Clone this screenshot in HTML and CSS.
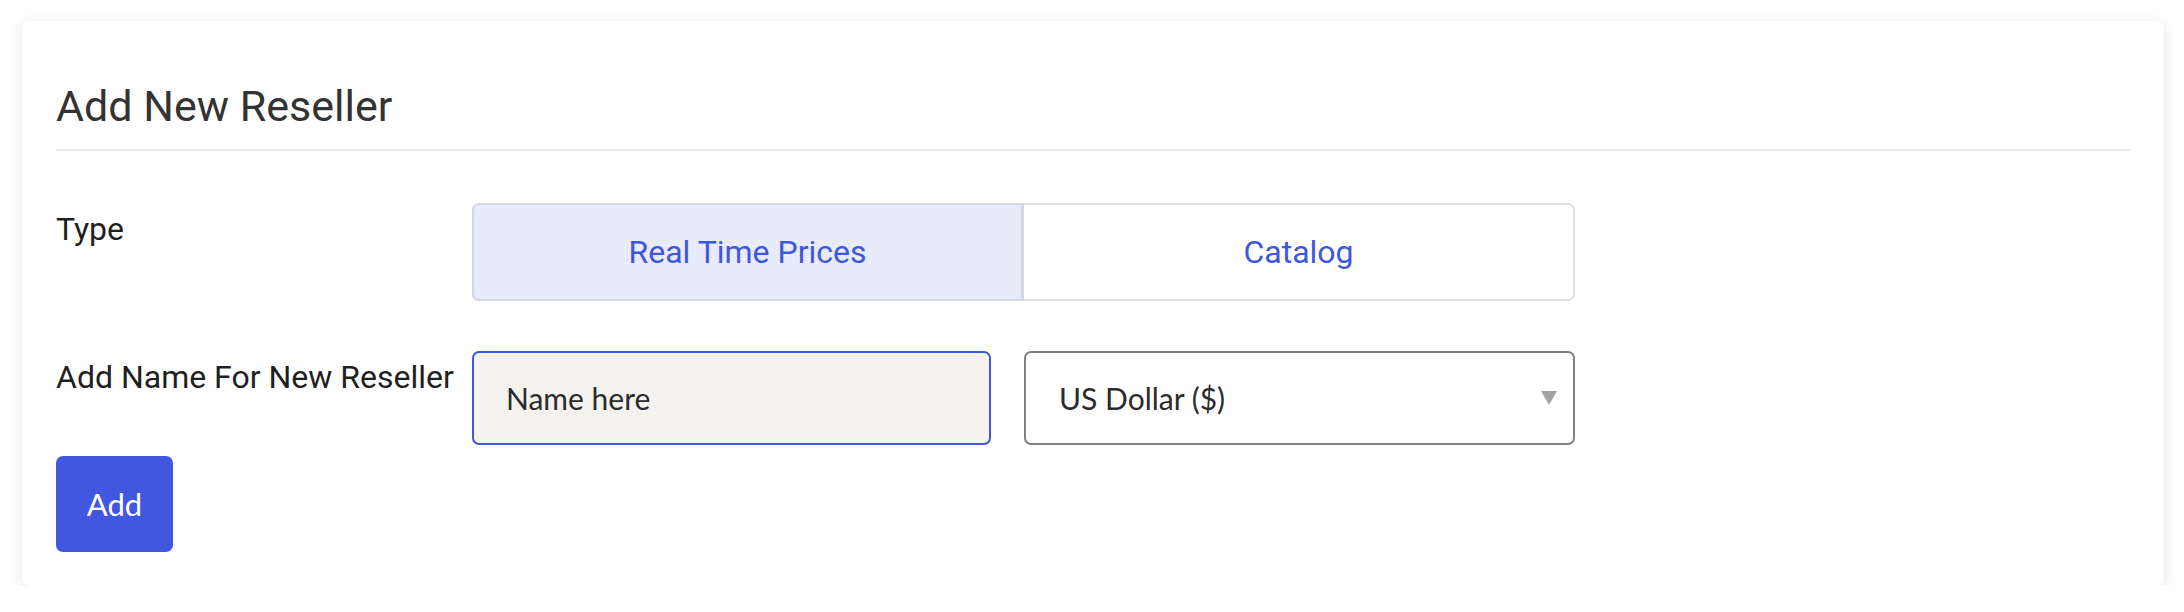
FILE: index.html
```html
<!DOCTYPE html>
<html lang="en">
<head>
    <meta charset="UTF-8">
    <meta name="viewport" content="width=device-width, initial-scale=1.0">
    <title>Add New Reseller</title>
    <link rel="stylesheet" href="styles.css">
</head>
<body>
    <div class="card">
        <div class="card-header">
            <h2>Add New Reseller</h2>
        </div>

        <form class="reseller-form">
            <div class="form-row">
                <label class="form-label">Type</label>
                <div class="type-toggle">
                    <button type="button" class="toggle-btn active">Real Time Prices</button>
                    <button type="button" class="toggle-btn">Catalog</button>
                </div>
            </div>

            <div class="form-row">
                <label class="form-label" for="reseller-name">Add Name For New Reseller</label>
                <div class="name-fields">
                    <input type="text" id="reseller-name" class="name-input" placeholder="Name here">
                    <div class="select-wrap">
                        <select class="currency-select">
                            <option>US Dollar ($)</option>
                            <option>Euro (€)</option>
                        </select>
                    </div>
                </div>
            </div>

            <button type="button" class="add-btn">Add</button>
        </form>
    </div>
</body>
</html>
```

FILE: styles.css
```css
* {
    margin: 0;
    padding: 0;
    box-sizing: border-box;
}

body {
    background-color: #ffffff;
    font-family: Roboto, "Liberation Sans", sans-serif;
    color: #222222;
}

.card {
    margin: 21px 20px 0 22px;
    padding: 59px 34px 34px;
    background: #ffffff;
    border-radius: 7px;
    box-shadow: 0 3px 16px rgba(0, 0, 0, 0.11);
}

.card-header {
    padding-bottom: 17px;
    border-bottom: 2px solid #ebebeb;
}

h2 {
    font-size: 43px;
    font-weight: 400;
    line-height: 52px;
    color: #333333;
}

.reseller-form {
    margin-top: 52px;
}

.form-row {
    display: grid;
    grid-template-columns: 416px 1103px;
}

.form-row + .form-row {
    margin-top: 50px;
}

.form-label {
    padding-top: 2px;
    font-size: 32px;
    line-height: 48px;
    color: #1f1f1f;
}

.type-toggle {
    display: grid;
    grid-template-columns: 552px 551px;
    height: 98px;
}

.toggle-btn {
    font-family: Roboto, "Liberation Sans", sans-serif;
    font-size: 32px;
    color: #3f57dc;
    background: #ffffff;
    border: 2px solid #e2e2e2;
    border-left: none;
    border-radius: 0 7px 7px 0;
    cursor: pointer;
}

.toggle-btn.active {
    background: #e8ecfa;
    border: 2px solid #d2d7e4;
    border-right-width: 3px;
    border-radius: 7px 0 0 7px;
}

.name-fields {
    display: grid;
    grid-template-columns: 519px 551px;
    gap: 33px;
}

.name-input {
    height: 94px;
    padding: 0 32px;
    font-family: Lato, "Liberation Sans", sans-serif;
    font-size: 30px;
    color: #2b2b2b;
    background: #f3f2ef;
    border: 2px solid #3f57dc;
    border-radius: 7px;
    outline: none;
}

.name-input::placeholder {
    color: #2b2b2b;
    opacity: 1;
}

.select-wrap {
    position: relative;
}

.currency-select {
    width: 100%;
    height: 94px;
    padding: 0 33px;
    font-family: Lato, "Liberation Sans", sans-serif;
    font-size: 30px;
    color: #2b2b2b;
    background: #ffffff;
    border: 2px solid #808080;
    border-radius: 7px;
    appearance: none;
    -webkit-appearance: none;
    outline: none;
}

.select-wrap::after {
    content: "";
    position: absolute;
    right: 18px;
    top: 40px;
    border-left: 8px solid transparent;
    border-right: 8px solid transparent;
    border-top: 14px solid #a3a3a3;
    pointer-events: none;
}

.add-btn {
    display: block;
    margin-top: 11px;
    width: 117px;
    height: 96px;
    font-family: Lato, "Liberation Sans", sans-serif;
    font-size: 31px;
    color: #ffffff;
    background-color: #4257e0;
    border: none;
    border-radius: 7px;
    cursor: pointer;
}
```
